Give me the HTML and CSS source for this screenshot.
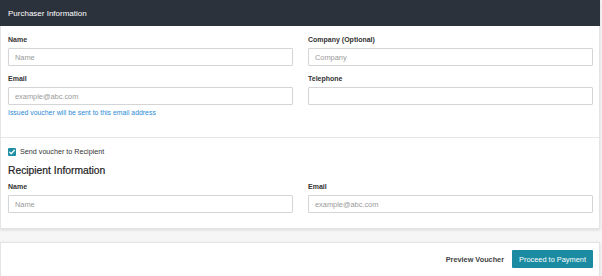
FILE: index.html
```html
<!DOCTYPE html>
<html lang="en">
<head>
  <meta charset="UTF-8">
  <title>Purchaser Information</title>
  <link rel="stylesheet" href="styles.css">
</head>
<body>
  <div class="card">
    <div class="card-head">Purchaser Information</div>

    <div class="section section-top">
      <div class="field-grid">
        <div class="field">
          <label class="field-label">Name</label>
          <input class="input" type="text" placeholder="Name">
        </div>
        <div class="field">
          <label class="field-label">Company (Optional)</label>
          <input class="input" type="text" placeholder="Company">
        </div>
        <div class="field">
          <label class="field-label">Email</label>
          <input class="input" type="email" placeholder="example@abc.com">
          <p class="help">Issued voucher will be sent to this email address</p>
        </div>
        <div class="field">
          <label class="field-label">Telephone</label>
          <input class="input" type="tel">
        </div>
      </div>
    </div>

    <div class="section section-bottom">
      <label class="check">
        <span class="check-box">
          <svg viewBox="0 0 10 10"><path d="M2 5.2l2 2 4-4.4" fill="none" stroke="#fff" stroke-width="1.6" stroke-linecap="round" stroke-linejoin="round"/></svg>
        </span>
        Send voucher to Recipient
      </label>
      <h2 class="sub-title">Recipient Information</h2>
      <div class="field-grid">
        <div class="field">
          <label class="field-label">Name</label>
          <input class="input" type="text" placeholder="Name">
        </div>
        <div class="field">
          <label class="field-label">Email</label>
          <input class="input" type="email" placeholder="example@abc.com">
        </div>
      </div>
    </div>
  </div>

  <div class="card footer">
    <button class="btn-link" type="button">Preview Voucher</button>
    <button class="btn-primary" type="button">Proceed to Payment</button>
  </div>
</body>
</html>
```

FILE: styles.css
```css
* { margin: 0; padding: 0; box-sizing: border-box; }

body {
  width: 602px; background: #f6f6f6; color: #333;
  font-family: 'Liberation Sans', Arial, sans-serif;
}

.card {
  width: 600px; background: #fff; border: 1px solid #e4e4e4;
  box-shadow: 0 1px 3px rgba(0,0,0,0.12);
}

.card-head {
  height: 26px; margin: -1px -1px 0; padding: 0 8px;
  background: #2c323c; color: #fff; font-size: 8px; line-height: 27px;
}

.section { padding: 0 5px 0 7px; }
.section-top { padding-top: 9px; padding-bottom: 19px; border-bottom: 1px solid #e6e6e6; }
.section-bottom { padding-top: 9px; padding-bottom: 15px; }

.field-grid {
  display: grid; grid-template-columns: 285px 285px;
  column-gap: 15px; row-gap: 8px;
}

.field-label {
  display: block; font-size: 7px; font-weight: 700; line-height: 10px;
  color: #333; margin-bottom: 3px;
}

.input {
  display: block; width: 100%; height: 18px; padding: 0 6px;
  border: 1px solid #d5d5d5; border-radius: 1px; background: #fff;
  font-family: inherit; font-size: 7.4px; color: #333; outline: none;
}
.input::placeholder { color: #9a9a9a; }

.help {
  margin-top: 3px; font-size: 6.9px; line-height: 10px; color: #2a8ad6;
}

.check {
  display: flex; align-items: center; gap: 4px;
  font-size: 7.2px; line-height: 10px; color: #333;
}
.check-box {
  width: 8px; height: 8px; border-radius: 1px; background: #1d8ea3;
  display: flex; align-items: center; justify-content: center;
}
.check-box svg { width: 8px; height: 8px; }

.sub-title {
  margin-top: 7px; margin-bottom: 4px;
  font-size: 10.3px; font-weight: 400; line-height: 14px; color: #222;
  -webkit-text-stroke: 0.2px #222;
}

.footer {
  margin-top: 13px; height: 40px; padding: 7px 6px 0 0;
  display: flex; justify-content: flex-end; align-items: flex-start; gap: 8px;
}

.btn-link {
  height: 18px; border: none; background: none; cursor: pointer;
  font-family: inherit; font-size: 7.3px; font-weight: 700; color: #444;
}

.btn-primary {
  width: 81px; height: 18px; border: none; border-radius: 1px;
  background: #1a8ba1; color: #fff; cursor: pointer;
  font-family: inherit; font-size: 7.4px;
}
```
